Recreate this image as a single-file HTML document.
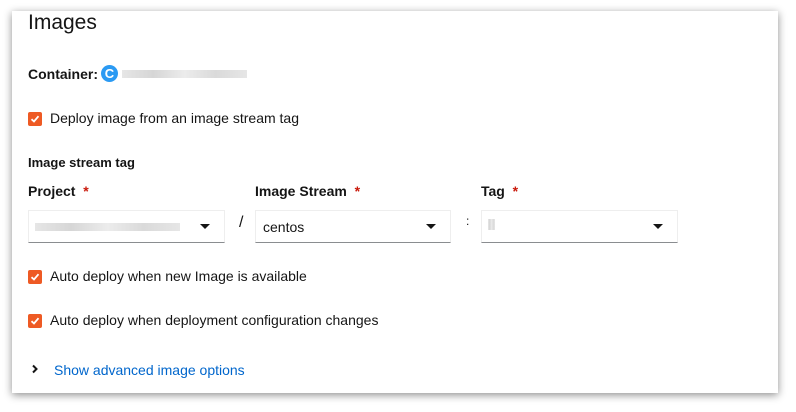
<!DOCTYPE html>
<html><head><style>
body{margin:0;width:796px;height:412px;background:#fff;font-family:"Liberation Sans",sans-serif;color:#151515;position:relative;overflow:hidden}
.panel{position:absolute;left:12px;top:11px;width:766px;height:382px;background:#fff;box-shadow:0 2px 8px rgba(0,0,0,.45)}
.a{position:absolute;white-space:nowrap}
.cb{position:absolute;width:14px;height:14px;background:#ee5a24;border-radius:2px}
.cb svg{position:absolute;left:2px;top:2px}
.sel{position:absolute;height:30px;border:1px solid #eee;border-bottom:1px solid #8a8d90;box-sizing:border-box;background:#fff}
.car{position:absolute;right:14px;top:13px;width:0;height:0;border-left:5px solid transparent;border-right:5px solid transparent;border-top:5px solid #151515}
.req{color:#c9190b}
.blur{position:absolute;height:8px;background:linear-gradient(90deg,#e6e6e6,#d6d6d6,#ececec,#dadada,#e6e6e6);}
</style></head><body>
<div class="panel"></div>
<div class="a" style="left:28px;top:11px;font-size:21px">Images</div>
<div class="a" style="left:28px;top:66px;font-size:14px;font-weight:bold">Container:</div>
<div class="a" style="left:101px;top:65px;width:17px;height:17px;border-radius:50%;background:#2b9af3;color:#fff;font-size:13px;font-weight:bold;text-align:center;line-height:17px">C</div>
<div class="blur" style="left:122px;top:70px;width:125px"></div>
<div class="cb" style="left:28px;top:112px"><svg width="10" height="10" viewBox="0 0 10 10"><path d="M1.5 5.2 L4 7.5 L8.5 2.2" stroke="#fff" stroke-width="1.8" fill="none"/></svg></div>
<div class="a" style="left:50px;top:110px;font-size:14px">Deploy image from an image stream tag</div>
<div class="a" style="left:28px;top:155px;font-size:13px;font-weight:bold">Image stream tag</div>
<div class="a" style="left:28px;top:183px;font-size:14px;font-weight:bold">Project <span class="req">&nbsp;*</span></div>
<div class="a" style="left:255px;top:183px;font-size:14px;font-weight:bold">Image Stream <span class="req">&nbsp;*</span></div>
<div class="a" style="left:481px;top:183px;font-size:14px;font-weight:bold">Tag <span class="req">&nbsp;*</span></div>
<div class="sel" style="left:28px;top:210px;width:197px;height:33px"><div class="blur" style="left:6px;top:12px;width:145px"></div><div class="car"></div></div>
<div class="a" style="left:239px;top:214px;font-size:16px">/</div>
<div class="sel" style="left:255px;top:210px;width:196px;height:33px"><div class="a" style="left:7px;top:8px;font-size:14px">centos</div><div class="car"></div></div>
<div class="a" style="left:466px;top:214px;font-size:12px">:</div>
<div class="sel" style="left:481px;top:210px;width:197px;height:33px"><div class="blur" style="left:6px;top:8px;width:7px;height:11px"></div><div class="car"></div></div>
<div class="cb" style="left:28px;top:270px"><svg width="10" height="10" viewBox="0 0 10 10"><path d="M1.5 5.2 L4 7.5 L8.5 2.2" stroke="#fff" stroke-width="1.8" fill="none"/></svg></div>
<div class="a" style="left:50px;top:268px;font-size:14px">Auto deploy when new Image is available</div>
<div class="cb" style="left:28px;top:314px"><svg width="10" height="10" viewBox="0 0 10 10"><path d="M1.5 5.2 L4 7.5 L8.5 2.2" stroke="#fff" stroke-width="1.8" fill="none"/></svg></div>
<div class="a" style="left:50px;top:312px;font-size:14px">Auto deploy when deployment configuration changes</div>
<svg class="a" style="left:31px;top:364px" width="8" height="10" viewBox="0 0 8 10"><path d="M2 1.5 L5.5 5 L2 8.5" stroke="#151515" stroke-width="2" fill="none"/></svg>
<div class="a" style="left:54px;top:362px;font-size:14px;color:#0066cc">Show advanced image options</div>
</body></html>
